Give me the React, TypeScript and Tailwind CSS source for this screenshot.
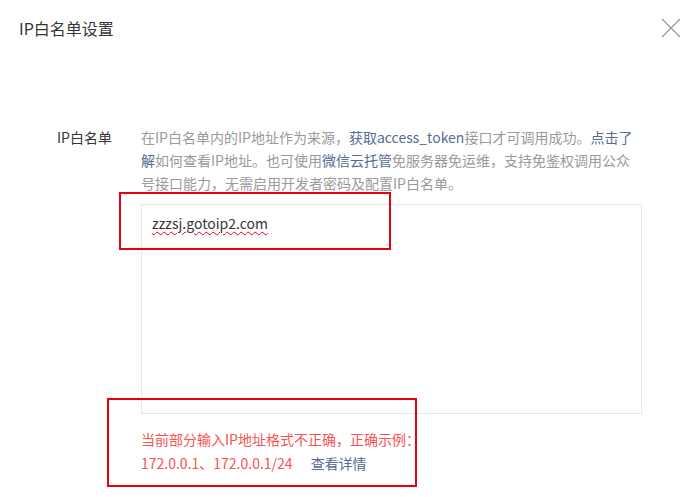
const font = { fontFamily: '"Microsoft YaHei", "Noto Sans CJK SC", "Noto Sans", sans-serif' };

export default function App() {
  return (
    <div className="relative w-[691px] h-[497px] bg-white overflow-hidden text-[#353535]" style={font}>
      <div className="flex items-center justify-between h-[56px] pl-[19px] pr-[10px]">
        <h1 className="text-[16px] leading-[20px] font-normal">IP白名单设置</h1>
        <svg width="20" height="20" viewBox="0 0 20 20" className="text-[#9b9b9b]">
          <path d="M1 1L19 19M19 1L1 19" stroke="currentColor" strokeWidth="1.3" fill="none" />
        </svg>
      </div>

      <div className="flex pt-[70px] pl-[57px]">
        <div className="w-[84px] shrink-0 text-[14px] leading-[23px]">IP白名单</div>
        <div className="w-[501px]">
          <p className="text-[14px] leading-[23px] text-[#9a9a9a] whitespace-nowrap">
            在IP白名单内的IP地址作为来源，<span className="text-[#576b95]">获取access_token</span>接口才可调用成功。<span className="text-[#576b95]">点击了</span>
            <br />
            <span className="text-[#576b95]">解</span>如何查看IP地址。也可使用<span className="text-[#576b95]">微信云托管</span>免服务器免运维，支持免鉴权调用公众
            <br />
            号接口能力，无需启用开发者密码及配置IP白名单。
          </p>
          <div className="mt-[9px] h-[210px] border border-[#e7e7e7] px-[10px] py-[5px]">
            <span className="text-[14px] leading-[20px] underline decoration-wavy decoration-[#e60012] decoration-1 underline-offset-2">
              zzzsj.gotoip2.com
            </span>
          </div>
          <p className="mt-[13px] text-[14px] leading-[24px] text-[#fa5151]">
            当前部分输入IP地址格式不正确，正确示例：
            <br />
            172.0.0.1、172.0.0.1/24<a className="ml-[18px] text-[#576b95]">查看详情</a>
          </p>
        </div>
      </div>

      <div className="absolute left-[119px] top-[192px] w-[272px] h-[58px] border-2 border-[#e60012]" />
      <div className="absolute left-[107px] top-[398px] w-[310px] h-[89px] border-2 border-[#e60012]" />
    </div>
  );
}
